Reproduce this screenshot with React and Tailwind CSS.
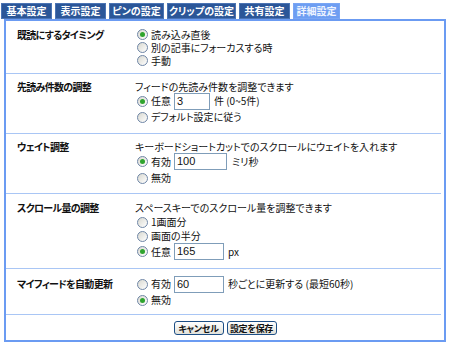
import React from "react"

const tabs = [
  { label: "基本設定", w: "w-[51px]" },
  { label: "表示設定", w: "w-[51px]" },
  { label: "ピンの設定", w: "w-[55px]" },
  { label: "クリップの設定", w: "w-[69px]" },
  { label: "共有設定", w: "w-[51px]" },
  { label: "詳細設定", w: "w-[47px]", active: true },
]

const Radio = ({ checked, children }) => (
  <span className="flex items-center">
    <span className="ml-[2px] mr-[3px] flex h-[11px] w-[11px] items-center justify-center rounded-full border border-[#6f86a6] bg-[linear-gradient(135deg,#d8d8d0,#ffffff)]">
      {checked && <span className="h-[5px] w-[5px] rounded-full bg-[#2ea42e]" />}
    </span>
    <span>{children}</span>
  </span>
)

const Field = ({ value, w }) => (
  <span
    className={`flex h-[17px] ${w} items-center border border-[#7f9db9] bg-white pl-[2px] font-['Liberation_Sans',sans-serif] text-[11px]`}
  >
    {value}
  </span>
)

const Divider = () => <div className="mr-[3px] h-px bg-[#a9c6f5]" />

const Section = ({ label, first, pt, pb, children }) => (
  <div className={`flex ${pt} ${pb}`}>
    <div className={`flex w-[129px] shrink-0 items-center pl-[11px] font-bold tracking-[-0.7px] ${first}`}>
      {label}
    </div>
    <div className="flex flex-col">{children}</div>
  </div>
)

const Button = ({ children }) => (
  <button className="flex h-[14px] w-[50px] items-center justify-center whitespace-nowrap rounded-[3px] border border-[#1d4f86] bg-[linear-gradient(#ffffff,#e2e2da)] text-[9px] font-bold leading-none tracking-[-0.3px]">
    {children}
  </button>
)

export default function App() {
  return (
    <div className="h-[348px] w-[450px] bg-white pt-[3px] font-['Noto_Sans_CJK_JP',sans-serif] text-[10px] leading-none text-[#111] [font-feature-settings:'palt']">
      <div className="flex h-[16px] gap-[3px] pl-[1px]">
        {tabs.map((t) => (
          <div
            key={t.label}
            className={`flex ${t.w} items-center justify-center border font-bold ${
              t.active
                ? "border-[#7aa6f4] bg-[#6e9ef2] text-[#eef4ff]"
                : "border-[#4b74b4] bg-[#2b5698] text-white"
            }`}
          >
            {t.label}
          </div>
        ))}
      </div>
      <div className="ml-[4px] h-[323px] w-[442px] border-2 border-[#6b9bf2]">
        <Section label="既読にするタイミング" first="h-[13px]" pt="pt-[7px]" pb="pb-[6px]">
          <div className="flex h-[13px] items-center"><Radio checked>読み込み直後</Radio></div>
          <div className="flex h-[13px] items-center"><Radio>別の記事にフォーカスする時</Radio></div>
          <div className="flex h-[13px] items-center"><Radio>手動</Radio></div>
        </Section>
        <Divider />
        <Section label="先読み件数の調整" first="h-[11px]" pt="pt-[7px]" pb="pb-[9px]">
          <div className="flex h-[11px] items-center">フィードの先読み件数を調整できます</div>
          <div className="flex h-[18px] items-center">
            <Radio checked>任意</Radio>
            <span className="ml-[3px]"><Field value="3" w="w-[36px]" /></span>
            <span className="ml-[4px]">件 (0~5件)</span>
          </div>
          <div className="flex h-[14px] items-center"><Radio>デフォルト設定に従う</Radio></div>
        </Section>
        <Divider />
        <Section label="ウェイト調整" first="h-[11px]" pt="pt-[7px]" pb="pb-[8px]">
          <div className="flex h-[11px] items-center">キーボードショートカットでのスクロールにウェイトを入れます</div>
          <div className="flex h-[19px] items-center">
            <Radio checked>有効</Radio>
            <span className="ml-[3px]"><Field value="100" w="w-[53px]" /></span>
            <span className="ml-[5px]">ミリ秒</span>
          </div>
          <div className="flex h-[14px] items-center"><Radio>無効</Radio></div>
        </Section>
        <Divider />
        <Section label="スクロール量の調整" first="h-[14px]" pt="pt-[7px]" pb="pb-[8px]">
          <div className="flex h-[14px] items-center">スペースキーでのスクロール量を調整できます</div>
          <div className="flex h-[14px] items-center"><Radio>1画面分</Radio></div>
          <div className="flex h-[14px] items-center"><Radio>画面の半分</Radio></div>
          <div className="flex h-[17px] items-center">
            <Radio checked>任意</Radio>
            <span className="ml-[3px]"><Field value="165" w="w-[50px]" /></span>
            <span className="ml-[4px]">px</span>
          </div>
        </Section>
        <Divider />
        <Section label="マイフィードを自動更新" first="h-[18px]" pt="pt-[6px]" pb="pb-[7px]">
          <div className="flex h-[18px] items-center">
            <Radio>有効</Radio>
            <span className="ml-[3px]"><Field value="60" w="w-[50px]" /></span>
            <span className="ml-[4px]">秒ごとに更新する (最短60秒)</span>
          </div>
          <div className="flex h-[14px] items-center"><Radio checked>無効</Radio></div>
        </Section>
        <Divider />
        <div className="flex justify-center gap-[3px] pt-[6px]">
          <Button>キャンセル</Button>
          <Button>設定を保存</Button>
        </div>
      </div>
    </div>
  )
}
